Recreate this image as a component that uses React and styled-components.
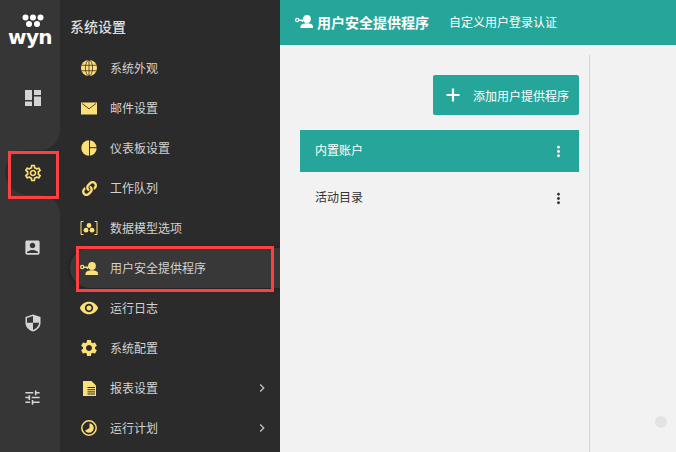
import React from "react";
import styled, { createGlobalStyle } from "styled-components";
import { FaLink } from "react-icons/fa";
import {
  MdVisibility, MdSettings, MdChevronRight,
  MdMoreVert, MdAccountBox, MdTune, MdOutlineSettings,
} from "react-icons/md";

const YELLOW = "#fddf78";
const TEAL = "#26a69a";
const CJK = `"Noto Sans CJK SC", "Liberation Sans", sans-serif`;

const Global = createGlobalStyle`
  html, body { margin: 0; padding: 0; background: #f2f2f2; }
  * { box-sizing: border-box; }
  body { font-family: ${CJK}; }
  svg { flex: none; }
`;

const Page = styled.div`
  display: flex; width: 676px; height: 452px; overflow: hidden; position: relative;
`;
const Rail = styled.nav`
  width: 60px; flex: none; display: flex; flex-direction: column; background: #2b2b2b;
`;
const RailTop = styled.div`
  background: #363636; height: 150px; border-bottom-right-radius: 20px;
  display: flex; flex-direction: column;
`;
const RailBottom = styled.div`
  background: #363636; flex: 1; border-top-right-radius: 20px; padding-top: 15px;
`;
const RailActiveWrap = styled.div`
  background: #363636; height: 45px; padding-left: 5px; position: relative; flex: none;
`;
const RailActive = styled.div`
  height: 100%; background: #2b2b2b; border-radius: 23px 0 0 23px; color: ${YELLOW};
  display: flex; align-items: center; justify-content: center;
`;
const Logo = styled.div`
  height: 60px; display: flex; flex-direction: column; align-items: center; padding-top: 14px;
  color: #fff;
`;
const LogoDots = styled.svg`
  margin-left: 6px;
`;
const LogoWord = styled.span`
  font-family: "DejaVu Sans", sans-serif; font-weight: 700; font-size: 20px; line-height: 16px;
  letter-spacing: -0.6px; margin-top: 1px;
`;
const RailItem = styled.div`
  height: 75px; display: flex; align-items: center; justify-content: center; color: #d6d6d6;
  padding-left: 5px;
`;
const RedBox = styled.div`
  position: absolute; border: 3px solid #ff4040; pointer-events: none;
  left: ${(p) => p.$left}px; top: ${(p) => p.$top}px;
  width: ${(p) => p.$w}px; height: ${(p) => p.$h}px; z-index: 3;
`;

const Panel = styled.aside`
  width: 220px; flex: none; background: #2b2b2b; padding-left: 10px; color: #d2d2d2;
`;
const PanelTitle = styled.div`
  height: 48px; padding-top: 16px; font-size: 14px; line-height: 20px; font-weight: 500; color: #dedede;
`;
const MenuList = styled.ul`
  list-style: none; margin: 0; padding: 0;
`;
const MenuRow = styled.li`
  height: 40px; display: flex; align-items: center; position: relative;
  padding-left: 11px; font-size: 12px; gap: 13px;
  background: ${(p) => (p.$active ? "#383838" : "transparent")};
  border-radius: ${(p) => (p.$active ? "20px 0 0 20px" : "0")};
  box-shadow: ${(p) => (p.$active ? "0 0 5px rgba(0,0,0,.35)" : "none")};
`;
const MenuIcon = styled.span`
  width: 16px; height: 16px; flex: none; color: ${YELLOW};
  display: flex; align-items: center; justify-content: center;
`;
const MenuLabel = styled.span`
  flex: 1; line-height: 16px;
`;
const Chevron = styled.span`
  width: 16px; margin-right: 10px; display: flex; justify-content: center; color: #b9c2cc;
`;

const Main = styled.main`
  flex: 1; display: flex; flex-direction: column; background: #f2f2f2; position: relative;
`;
const TopBar = styled.header`
  height: 45px; flex: none; background: ${TEAL}; color: #fff; display: flex; align-items: center;
  padding: 0 0 1px 15px;
`;
const TopIcon = styled.span`
  width: 18px; height: 14px; display: flex; margin-right: 4px;
`;
const TopTitle = styled.span`
  font-size: 14px; font-weight: 700; line-height: 18px;
`;
const TopSub = styled.span`
  font-size: 12px; line-height: 18px; margin-left: 20px;
`;
const Column = styled.section`
  width: 310px; flex: 1; margin-top: 10px; padding: 20px 10px 0 20px; border-right: 1px solid #d4d4d4;
  display: flex; flex-direction: column;
`;
const AddButton = styled.button`
  align-self: flex-end; width: 146px; height: 40px; border: 0; border-radius: 2px;
  background: ${TEAL}; color: #fff; display: flex; align-items: center; padding: 0 0 0 13px;
  font: 12px ${CJK}; margin-bottom: 15px; gap: 13px;
`;
const ProviderRow = styled.div`
  height: ${(p) => p.$h}px; padding-left: 15px; display: flex; align-items: center; font-size: 12px;
  background: ${(p) => (p.$selected ? TEAL : "transparent")};
  color: ${(p) => (p.$selected ? "#fff" : "#333")};
`;
const ProviderLabel = styled.span`
  flex: 1; margin-bottom: 3px;
`;
const Dots = styled.span`
  display: flex; margin-right: 12px; color: ${(p) => (p.$selected ? "#fff" : "#333")};
`;
const Floating = styled.div`
  position: absolute; right: 9px; bottom: 24px; width: 12px; height: 12px; border-radius: 50%;
  background: #e3e3e3;
`;

const DashIcon = () => (
  <svg width="16" height="16" viewBox="0 0 16 16" fill="#d4d4d4">
    <rect x="0" y="0" width="7" height="10" /><rect x="9" y="0" width="7" height="5" />
    <rect x="0" y="11.5" width="7" height="4.5" /><rect x="9" y="6.5" width="7" height="9.5" />
  </svg>
);
const ShieldIcon = () => (
  <svg width="16" height="18" viewBox="0 0 16 18">
    <path d="M8 .5 15.5 3v6c0 4-3.2 7.3-7.5 8.500C3.700 16.300.5 13 .5 9V3z" fill="#d4d4d4" />
    <path d="M8 2.100 2 4.100V8.800H8zM8 8.800V15.900C11.300 14.800 14 12 14 8.800z" fill="#363636" />
  </svg>
);
const GlobeIcon = () => (
  <svg width="16" height="16" viewBox="0 0 16 16">
    <circle cx="8" cy="8" r="8" fill={YELLOW} />
    <g fill="none" stroke="#3a3420" strokeWidth=".8">
      <ellipse cx="8" cy="8" rx="3.600" ry="7.800" />
      <path d="M8 0v16M.5 5.300h15M.5 10.700h15" />
    </g>
  </svg>
);
const MailIcon = () => (
  <svg width="16" height="13" viewBox="0 0 16 13">
    <rect x="0" y="0.500" width="16" height="12" fill={YELLOW} />
    <path d="M1 1.500 8 6.800l7-5.300" fill="none" stroke="#3a3420" strokeWidth=".9" />
  </svg>
);
const PieIcon = () => (
  <svg width="16" height="16" viewBox="0 0 16 16">
    <circle cx="8" cy="8" r="7.700" fill={YELLOW} />
    <path d="M8.500 0v16M8.500 7.700H16" stroke="#2b2b2b" strokeWidth="1" fill="none" />
  </svg>
);
const ModelIcon = () => (
  <svg width="18" height="16" viewBox="0 0 18 16" fill="none">
    <path d="M3.500 1.500H1v13h2.500M14.500 1.500H17v13h-2.500" stroke={YELLOW} strokeWidth="1" />
    <g fill={YELLOW}><circle cx="9" cy="5.500" r="2.400" /><circle cx="6" cy="10.200" r="2.400" /><circle cx="12" cy="10.200" r="2.400" /></g>
  </svg>
);
const KeyUser = ({ color }) => (
  <svg width="18" height="13" viewBox="0 0 18 13" fill={color}>
    <circle cx="12" cy="4" r="3.900" />
    <path d="M5.500 13v-1.500C5.500 9.500 9 8.300 12 8.300s6 1.200 6 3.200V13z" />
    <circle cx="2.200" cy="5" r="1.600" fill="none" stroke={color} strokeWidth="1.200" />
    <path d="M3.800 4.400H9V6H8V7H6.800V6H3.800z" />
  </svg>
);
const ReportIcon = () => (
  <svg width="13" height="15" viewBox="0 0 13 15">
    <path d="M0 0h8.500L13 4.500V15H0z" fill={YELLOW} />
    <path d="M4.500 6.500H12M4.500 8.700H12M4.500 10.900H12M4.500 13H12" stroke="#2b2b2b" strokeWidth="1" />
  </svg>
);
const ClockIcon = () => (
  <svg width="16" height="16" viewBox="0 0 16 16">
    <circle cx="8" cy="8" r="7.200" fill="none" stroke={YELLOW} strokeWidth="1.500" />
    <path d="M8.500 3.200A4.800 4.800 0 1 1 4 10.800L8.500 8z" fill={YELLOW} />
  </svg>
);
const PlusIcon = () => (
  <svg width="14" height="14" viewBox="0 0 14 14">
    <path d="M7 0.500V13.500M0.500 7H13.500" stroke="#fff" strokeWidth="2.200" fill="none" />
  </svg>
);

const items = [
  { label: "系统外观", icon: <GlobeIcon /> },
  { label: "邮件设置", icon: <MailIcon /> },
  { label: "仪表板设置", icon: <PieIcon /> },
  { label: "工作队列", icon: <FaLink size={15} /> },
  { label: "数据模型选项", icon: <ModelIcon /> },
  { label: "用户安全提供程序", icon: <KeyUser color={YELLOW} />, active: true },
  { label: "运行日志", icon: <MdVisibility size={20} /> },
  { label: "系统配置", icon: <MdSettings size={20} /> },
  { label: "报表设置", icon: <ReportIcon />, more: true },
  { label: "运行计划", icon: <ClockIcon />, more: true },
];

export default function App() {
  return (
    <Page>
      <Global />
      <Rail>
        <RailTop>
          <Logo>
            <LogoDots width="24" height="14" viewBox="0 0 24 14" fill="#fff">
              <circle cx="4.500" cy="3.500" r="3" /><circle cx="12" cy="3.500" r="3" /><circle cx="19.500" cy="3.500" r="3" />
              <circle cx="8" cy="10" r="3" /><circle cx="16" cy="10" r="3" />
            </LogoDots>
            <LogoWord>wyn</LogoWord>
          </Logo>
          <RailItem><DashIcon /></RailItem>
        </RailTop>
        <RailActiveWrap>
          <RailActive><MdOutlineSettings size={20} /></RailActive>
          <RedBox $left={8} $top={1} $w={51} $h={48} />
        </RailActiveWrap>
        <RailBottom>
          <RailItem><MdAccountBox size={19} /></RailItem>
          <RailItem><ShieldIcon /></RailItem>
          <RailItem><MdTune size={19} /></RailItem>
        </RailBottom>
      </Rail>
      <Panel>
        <PanelTitle>系统设置</PanelTitle>
        <MenuList>
          {items.map((it) => (
            <MenuRow key={it.label} $active={it.active}>
              <MenuIcon>{it.icon}</MenuIcon>
              <MenuLabel>{it.label}</MenuLabel>
              {it.more && <Chevron><MdChevronRight size={16} /></Chevron>}
              {it.active && <RedBox $left={6} $top={-2} $w={198} $h={46} />}
            </MenuRow>
          ))}
        </MenuList>
      </Panel>
      <Main>
        <TopBar>
          <TopIcon><KeyUser color="#fff" /></TopIcon>
          <TopTitle>用户安全提供程序</TopTitle>
          <TopSub>自定义用户登录认证</TopSub>
        </TopBar>
        <Column>
          <AddButton><PlusIcon />添加用户提供程序</AddButton>
          <ProviderRow $selected $h={42}>
            <ProviderLabel>内置账户</ProviderLabel>
            <Dots $selected><MdMoreVert size={17} /></Dots>
          </ProviderRow>
          <ProviderRow $h={52}>
            <ProviderLabel>活动目录</ProviderLabel>
            <Dots><MdMoreVert size={17} /></Dots>
          </ProviderRow>
        </Column>
        <Floating />
      </Main>
    </Page>
  );
}
